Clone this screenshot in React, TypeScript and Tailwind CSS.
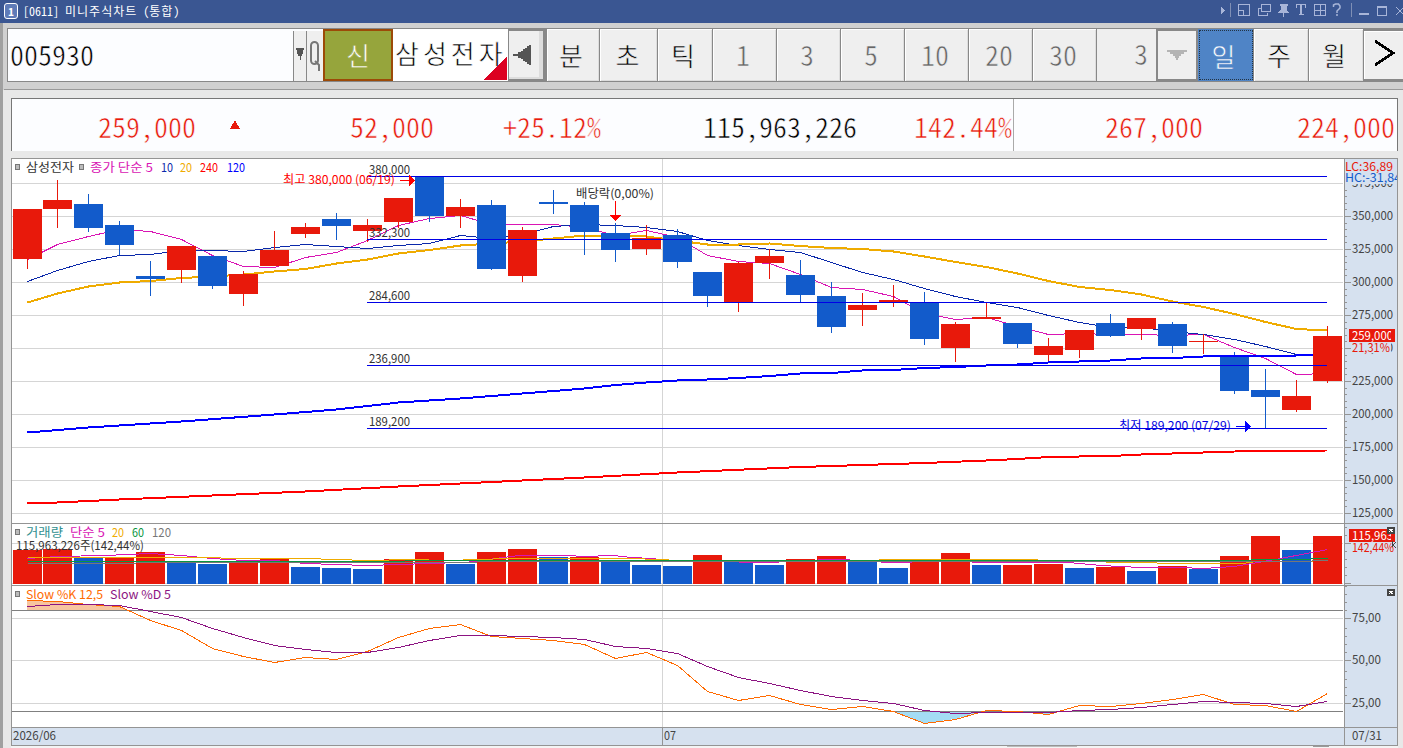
import type { ReactNode } from "react";
import { clsx } from "clsx";

const RED = "#e8190b";
const BLUE = "#125bcb";
const GRID = "#d5d5d5";
const FONT = "'Noto Sans CJK KR', 'Liberation Sans', sans-serif";

// x centre of the n-th daily candle
const cx = (i: number) => (i === 0 ? 27 : i < 22 ? 26 + 31 * i : 25 + 31 * i);

// [up, body top, body bottom, high, low]
const candles: [number, number, number, number, number][] = [
  [1, 209, 259, 209, 269], [1, 200, 209, 180, 228], [0, 204, 228, 194, 232], [0, 225, 245, 221, 255],
  [0, 276, 279, 261, 296], [1, 246, 270, 246, 283], [0, 256, 286, 256, 289], [1, 274, 294, 271, 306],
  [1, 250, 266, 231, 266], [1, 227, 234, 223, 238], [0, 219, 226, 213, 240], [1, 225, 231, 219, 242],
  [1, 198, 222, 198, 228], [0, 176, 216, 176, 222], [1, 207, 216, 199, 228], [0, 205, 269, 200, 270],
  [1, 230, 276, 227, 282], [0, 202, 204, 190, 214], [0, 205, 232, 202, 255], [0, 233, 250, 223, 262],
  [1, 238, 249, 225, 255], [0, 235, 262, 229, 268], [0, 272, 296, 272, 307], [1, 263, 302, 262, 312],
  [1, 256, 263, 249, 279], [0, 275, 295, 260, 302], [0, 296, 327, 282, 333], [1, 305, 310, 293, 326],
  [1, 300, 302, 285, 307], [0, 302, 339, 292, 345], [1, 324, 348, 322, 362], [1, 317, 319, 302, 319],
  [0, 323, 344, 323, 348], [1, 346, 355, 338, 363], [1, 330, 350, 330, 358], [0, 323, 336, 314, 337],
  [1, 318, 329, 318, 340], [0, 324, 346, 322, 353], [1, 341, 342, 334, 354], [0, 356, 391, 352, 394],
  [0, 390, 397, 369, 428], [1, 396, 410, 380, 412], [1, 336, 381, 326, 383],
];

const ma5 = [259, 244, 236, 229, 231, 239, 255, 266, 267, 257, 252, 240, 225, 218, 215, 224, 224, 224, 227, 235, 230, 237, 255, 261, 263, 274, 287, 289, 296, 313, 319, 317, 326, 334, 333, 334, 334, 335, 334, 347, 358, 374, 373];
const ma10 = [281, 270, 261, 255, 254, 250, 250, 251, 247, 244, 246, 248, 245, 243, 235, 238, 234, 226, 224, 225, 227, 231, 240, 245, 249, 252, 262, 272, 279, 288, 296, 302, 307, 315, 322, 327, 327, 331, 334, 339, 346, 354, 354];
const ma20 = [302, 293, 286, 282, 280.5, 277.5, 276, 274, 271, 268.5, 263, 259, 253, 249.5, 245, 243, 241, 238, 235, 235, 236, 240, 244, 244, 243, 245.5, 247.5, 248.5, 251, 256, 261.5, 266.5, 273, 280.5, 286.5, 289.5, 294, 301, 306.5, 313.5, 321.5, 328.5, 330];

const ma120 = "27,432 88,427 181,421 274,414 336,409 398,402 460,398 522,393 584,388 615,384.5 646,382 677,380 707,379 738,377.5 769,375.5 800,373 831,372.5 862,370 893,369.5 924,367.5 955,366.5 986,365 1017,364 1048,362 1079,361 1110,360 1141,358 1172,357.5 1203,356 1265,355.5 1296,355 1327,354";
const ma240 = "27,503 57,502 119,499 212,495 305,491 398,486 491,481.5 584,477 677,472 800,466.5 924,462.5 986,460 1017,458.5 1048,456.5 1110,455.5 1141,454 1172,453 1203,452 1250,450.5 1327,450";

// [rising, bar top]
const volumes: [number, number][] = [
  [1, 550], [1, 549], [0, 558], [1, 558], [1, 552], [0, 562], [0, 564], [1, 562], [1, 559], [0, 567], [0, 568],
  [0, 569], [1, 559], [1, 552], [0, 564], [1, 552], [1, 549], [0, 557], [1, 557], [0, 562], [0, 565], [0, 566],
  [1, 555], [0, 562], [0, 565], [1, 559], [1, 556], [0, 562], [0, 568], [1, 562], [1, 553], [0, 565], [1, 565],
  [1, 564], [0, 568], [1, 567], [0, 571], [1, 566], [0, 569], [1, 556], [1, 536], [0, 550], [1, 536],
];
const vol5 = "27,558 57,556 104,555 150,553 181,555 212,558 243,560 274,560 305,563 336,564 367,565 398,564 429,563 460,562 477,561 495,558 519,555 569,555 582,556 613,555 631,557 651,558 677,561 707,561 769,562 827,559 845,559 863,561 897,562 926,561 1015,562 1068,562 1090,564 1100,565 1120,566 1140,567 1180,567 1203,568 1233,566 1252,563 1280,558 1327,549";
const vol20 = "27,557 210,557 230,558 305,558 336,559 367,560 410,559 446,560 480,559 506,558 631,558 658,559 700,561 814,560 943,559 1033,559 1042,560 1126,562 1156,562 1157,563 1242,563 1256,561 1312,561";
const vol60 = "27,561 390,561 420,560 1250,560 1251,559 1310,559 1311,558 1327,558";
const vol120 = "27,563 135,563 136,562 476,562 477,561 1311,561 1312,560 1327,560";

const slowK = [600, 601, 604, 606, 620, 630, 648, 656, 662, 657, 659, 651, 637, 628, 624, 636, 638, 640, 644, 658, 652, 665, 691, 700, 695, 704, 709, 706, 711, 723, 719, 710, 711, 714, 705, 706, 703, 699, 694, 704, 705, 711, 693];
const slowD = [606, 604, 604, 605, 611, 617, 628, 637, 645, 649, 652, 652, 647, 640, 635, 635, 636, 637, 639, 646, 648, 653, 666, 677, 683, 690, 696, 700, 703, 710, 713, 712, 712, 712, 710, 709, 707, 704, 701, 702, 703, 706, 701];

const toPoints = (ys: number[]) => ys.map((y, i) => `${cx(i)},${y}`).join(" ");

const prices = [375, 350, 325, 300, 275, 250, 225, 200, 175, 150, 125];
const priceY = (p: number) => 216 + ((350 - p) / 25) * 33;

type LabelProps = { x: number; y: number; w: number; fill?: string; children: string };

const Label = ({ x, y, w, fill = "#333", children }: LabelProps) => (
  <text x={x} y={y} textLength={w} lengthAdjust="spacingAndGlyphs" fill={fill} fontSize={12} fontFamily={FONT} xmlSpace="preserve">
    {children}
  </text>
);

const Line = ({ points, color, width = 1 }: { points: string; color: string; width?: number }) => (
  <polyline points={points} fill="none" stroke={color} strokeWidth={width} transform="translate(0.5 0.5)" />
);

const HLine = ({ y, color = GRID, x1 = 12, x2 = 1343 }: { y: number; color?: string; x1?: number; x2?: number }) => (
  <rect x={x1} y={y} width={x2 - x1} height={1} fill={color} />
);

const Handle = ({ x, y }: { x: number; y: number }) => (
  <rect x={x + 0.5} y={y + 0.5} width={4} height={5} fill="#bbb" stroke="#777" />
);

const CloseBox = ({ y }: { y: number }) => (
  <g>
    <rect x={1387} y={y} width={8} height={7} fill="#444" />
    <path d={`M1389 ${y + 2}l4 3m0 -3l-4 3`} stroke="#fff" strokeWidth={1} />
  </g>
);

const Plot = ({ top, height, children }: { top: number; height: number; children: ReactNode }) => (
  <svg className="block bg-white" width={1332} height={height} viewBox={`12 ${top} 1332 ${height}`} shapeRendering="crispEdges">
    <rect x={662} y={top} width={1} height={height} fill={GRID} />
    {children}
  </svg>
);

const Axis = ({ top, height, children }: { top: number; height: number; children: ReactNode }) => (
  <svg className="block border-l border-[#949494] bg-[#d6e1ef]" width={53} height={height} viewBox={`1345 ${top} 52 ${height}`} shapeRendering="crispEdges">
    {children}
  </svg>
);

const Ticks = ({ major, minor }: { major: number[]; minor: number[] }) => (
  <g fill="#949494">
    {major.map((y) => <rect key={y} x={1345} y={y} width={6} height={1} />)}
    {minor.map((y) => <rect key={y} x={1345} y={y} width={2} height={1} />)}
  </g>
);

const PricePlot = () => (
  <Plot top={159} height={364}>
    {prices.map((p) => <HLine key={p} y={priceY(p)} />)}
    <Line points={toPoints(ma5)} color="#d915b4" />
    <Line points={toPoints(ma10)} color="#0a28aa" />
    <Line points={toPoints(ma20)} color="#efab00" width={2} />
    {candles.map(([up, top, bottom, high, low], i) => (
      <g key={i} fill={up ? RED : BLUE}>
        <rect x={cx(i)} y={high} width={1} height={low - high} />
        <rect x={cx(i) - 14} y={top} width={29} height={bottom - top} />
      </g>
    ))}
    <Line points={ma240} color="#f00" width={2} />
    <Line points={ma120} color="#00f" width={2} />
    <rect x={1313} y={336} width={29} height={45} fill={RED} />
    {[
      { y: 176, text: "380,000" },
      { y: 239, text: "332,300" },
      { y: 302, text: "284,600" },
      { y: 365, text: "236,900" },
      { y: 428, text: "189,200" },
    ].map(({ y, text }) => (
      <g key={y}>
        <HLine y={y} color="#0000e6" x1={367} x2={1327} />
        <Label x={369} y={y - 2} w={41}>{text}</Label>
      </g>
    ))}
    <Label x={283} y={184} w={112} fill="#f00">최고 380,000 (06/19)</Label>
    <path d="M400 180h9v-5l6 5.500l-6 5.500v-5h-9z" fill="#f00" />
    <Label x={1119} y={430} w={112} fill="#00d">최저 189,200 (07/29)</Label>
    <path d="M1236 426h9v-5l6 5.500l-6 5.500v-5h-9z" fill="#00f" />
    <Label x={576} y={198} w={78}>배당락(0,00%)</Label>
    <path d="M615 201h1v14h5l-5.500 6l-5.500 -6h5z" fill="#f00" />
    <Handle x={15} y={164} />
    <Label x={26} y={172} w={48}>삼성전자</Label>
    <Handle x={79} y={164} />
    <Label x={90} y={172} w={63} fill="#d915b4">종가 단순 5</Label>
    <Label x={161} y={172} w={12} fill="#0a28aa">10</Label>
    <Label x={180} y={172} w={12} fill="#efab00">20</Label>
    <Label x={200} y={172} w={18} fill="#f00">240</Label>
    <Label x={227} y={172} w={18} fill="#00f">120</Label>
  </Plot>
);

const PriceAxis = () => (
  <Axis top={159} height={364}>
    <Ticks
      major={prices.map(priceY)}
      minor={prices.flatMap((p) => [1, 2, 3, 4].map((n) => Math.round(priceY(p) - n * 6.6)))}
    />
    {prices.map((p) => (
      <Label key={p} x={1352} y={priceY(p) + 4} w={41} fill="#444">{`${p},000`}</Label>
    ))}
    <rect x={1345} y={159} width={52} height={25} fill="#d6e1ef" />
    <Label x={1345} y={171} w={48} fill={RED}>LC:36,89</Label>
    <Label x={1345} y={182} w={56} fill={BLUE}>HC:-31,84</Label>
    <rect x={1351} y={342} width={40} height={11} fill="#d6e1ef" />
    <rect x={1349} y={329} width={46} height={13} fill={RED} />
    <Label x={1352} y={340} w={41} fill="#fff">259,000</Label>
    <rect x={1391} y={330} width={4} height={12} fill={RED} />
    <Label x={1352} y={352} w={38} fill={RED}>21,31%</Label>
  </Axis>
);

const VolumePlot = () => (
  <Plot top={524} height={61}>
    <HLine y={543} />
    <HLine y={583} />
    {volumes.map(([up, top], i) => (
      <rect key={i} x={cx(i) - 14} y={top} width={29} height={584 - top} fill={up ? RED : BLUE} />
    ))}
    <Line points={vol5} color="#d915b4" />
    <Line points={vol20} color="#efab00" />
    <Line points={vol60} color="#0a9640" />
    <Line points={vol120} color="#777" />
    <Handle x={15} y={529} />
    <Label x={26} y={537} w={37} fill="#329090">거래량</Label>
    <Label x={70} y={537} w={35} fill="#d915b4">단순 5</Label>
    <Label x={112} y={537} w={12} fill="#efab00">20</Label>
    <Label x={132} y={537} w={12} fill="#0a9640">60</Label>
    <Label x={152} y={537} w={19} fill="#777">120</Label>
    <Label x={16} y={550} w={128}>115,963,226주(142,44%)</Label>
  </Plot>
);

const VolumeAxis = () => (
  <Axis top={524} height={61}>
    <Ticks major={[543, 583]} minor={[527, 535, 551, 559, 567, 575]} />
    <rect x={1349} y={529} width={46} height={13} fill={RED} />
    <Label x={1352} y={540} w={41} fill="#fff">115,963</Label>
    <rect x={1391} y={534} width={4} height={8} fill={RED} />
    <Label x={1352} y={552} w={42} fill={RED}>142,44%</Label>
    <path d="M1392.500 541v6m3 -5l-2 3l2 3" fill="none" stroke="#444" />
    <CloseBox y={527} />
  </Axis>
);

const StochasticPlot = () => (
  <Plot top={586} height={141}>
    <clipPath id="overbought"><rect x={12} y={586} width={1332} height={24} /></clipPath>
    <clipPath id="oversold"><rect x={12} y={712} width={1332} height={15} /></clipPath>
    {[618, 660, 703].map((y) => <HLine key={y} y={y} />)}
    <polygon points={`27,720 ${toPoints(slowK)} 1327,720`} fill="#f7c5a0" clipPath="url(#overbought)" />
    <polygon points={`27,600 ${toPoints(slowK)} 1327,600`} fill="#a4dcf4" clipPath="url(#oversold)" />
    <HLine y={610} color="#808080" />
    <HLine y={711} color="#808080" />
    <Line points={toPoints(slowK)} color="#ff6a00" />
    <Line points={toPoints(slowD)} color="#8c1482" />
    <Handle x={15} y={591} />
    <Label x={26} y={599} w={77} fill="#ff6a00">Slow %K 12,5</Label>
    <Label x={110} y={599} w={61} fill="#8c1482">Slow %D 5</Label>
  </Plot>
);

const StochasticAxis = () => (
  <Axis top={586} height={141}>
    <Ticks major={[618, 660, 703]} minor={[586, 594, 602, 610, 628, 636, 644, 652, 671, 679, 687, 695]} />
    <Label x={1352} y={622} w={29} fill="#444">75,00</Label>
    <Label x={1352} y={664} w={29} fill="#444">50,00</Label>
    <Label x={1352} y={707} w={29} fill="#444">25,00</Label>
    <CloseBox y={589} />
  </Axis>
);

const TitleBar = () => (
  <header className="flex h-[23px] items-center justify-between bg-[#3a5692] pl-1 font-['Noto_Sans_Mono_CJK_KR','Noto_Sans_CJK_KR',monospace] text-white">
    <div className="flex items-center gap-[5px] pb-px">
      <span className="flex h-4 w-[14px] items-center justify-center rounded-[3px] border border-white bg-[#5f7bb8] text-[11px] font-bold leading-none">1</span>
      <span className="whitespace-pre text-[12px] leading-none">
        [0611] <span className="tracking-[1px]">미니주식차트</span> (<span className="tracking-[1px]">통합</span>)
      </span>
    </div>
    <svg width={183} height={23} viewBox="1220 0 183 23" fill="none" stroke="#a8b5d8" shapeRendering="crispEdges">
      <path d="M1221 7l4 3.500l-4 3.500z" fill="#a8b5d8" stroke="none" />
      <path d="M1230.500 3v14M1351.500 3v14" stroke="#7f8fb5" />
      <path d="M1238.500 4.500h11v11h-11zM1238.500 10.500h5v5h-5z" />
      <path d="M1261.500 4.500h9v7h-9zM1261 8.500h-2.500v7h9v-3" />
      <path d="M1279.500 4h8v2h-1v4l2.500 2v1h-11v-1l2.500 -2v-4h-1zM1283 13h1v4h-1z" fill="#a8b5d8" stroke="none" />
      <path d="M1296.500 7.500v-3h9v3M1299 14.500h5" />
      <path d="M1301 4.500v10" strokeWidth={2} />
      <path d="M1314.500 4.500h11v11h-11zM1320 4v12M1314 10h12" />
      <path d="M1333.500 7v-2l2 -1h3l1.500 2v2l-3 3v2M1337 14v2" strokeWidth={1.5} shapeRendering="auto" />
      <path d="M1359 14h10" strokeWidth={2} />
      <path d="M1377.500 6.500h9v9h-9zM1377 7h10" />
      <path d="M1396 7l8 8M1404 7l-8 8" shapeRendering="auto" />
    </svg>
  </header>
);

const Key = ({ className, children }: { className?: string; children: ReactNode }) => (
  <button
    className={clsx(
      "flex h-[52px] items-center justify-center border-r border-[#888] bg-[#efefef] shadow-[inset_1px_1px_0_#fff,inset_-1px_-1px_0_#ddd] [-webkit-text-stroke:0.6px_#efefef]",
      className
    )}
  >
    {children}
  </button>
);

const Toolbar = () => (
  <div className="flex h-[67px] items-start overflow-hidden border-b border-[#999] bg-[#d0d0d0] pl-[3px] pt-[5px] font-['Noto_Sans_Mono_CJK_KR','Noto_Sans_CJK_KR',monospace] text-[28px] leading-none text-black">
    <div className="flex h-[54px] shrink-0 border-y border-l border-[#888] bg-[#fcfdff]">
      <div className="flex w-[285px] items-center pb-[3px] pl-0.5 [-webkit-text-stroke:0.6px_#fcfdff]">005930</div>
      <button className="mt-0.5 flex h-[50px] w-[14px] items-center justify-center border-x border-[#888] bg-[#efefef] pb-1">
        <svg width={8} height={12} viewBox="0 0 8 12" fill="#555" shapeRendering="crispEdges"><path d="M0 0h8l-2 8h-1v4h-1v-4h-2z" /></svg>
      </button>
      <button className="mt-0.5 flex h-[50px] w-[16px] items-center justify-center bg-[#efefef]">
        <svg width={14} height={34} viewBox="0 0 14 34" fill="none" stroke="#777" strokeWidth={2}>
          <rect x="3" y="3" width="7" height="22" rx="3.500" />
          <path d="M7 22l4 4v6" />
        </svg>
      </button>
      <button className="flex h-[52px] w-[70px] items-center justify-center border-2 border-[#9c4a08] bg-[#96a53c] text-[26px] text-white [-webkit-text-stroke:0.6px_#96a53c]">신</button>
      <div className="relative flex w-[115px] items-center whitespace-nowrap bg-white pb-1 pl-[2px] text-[26px] tracking-[4px] [-webkit-text-stroke:0.6px_#fff]">
        삼성전자
        <svg className="absolute bottom-px right-px" width={24} height={24} viewBox="0 0 24 24" fill="#dc0021" shapeRendering="crispEdges"><path d="M24 0v24H0z" /></svg>
      </div>
      <button className="flex w-[39px] items-center border-b-2 border-l border-r-4 border-t-2 border-[#888] bg-[#efefef] pl-1 shadow-[inset_-4px_-2px_0_#ddd]">
        <svg width={18} height={20} viewBox="0 0 18 20" fill="#555" shapeRendering="crispEdges"><path d="M18 0v20l-4-1v-2l-4-1v-2l-5-1v-2H0V9h5V7l5-1V4l4-1V1z" /></svg>
      </button>
      <Key className="w-[53px] pr-1 text-[26px]">분</Key>
      <Key className="w-[58px] pr-0.5 text-[26px]">초</Key>
      <Key className="w-[55px] pr-1 text-[26px]">틱</Key>
      {["1", "3", "5", "10", "20", "30"].map((n) => (
        <Key key={n} className="w-[64px] pr-[3px] pb-[3px] text-[#666]">{n}</Key>
      ))}
      <div className="flex w-[59px] items-center justify-end bg-[#efefef] pr-2 pb-1 text-[#666] [-webkit-text-stroke:0.6px_#efefef]">3</div>
      <button className="flex w-[42px] items-center justify-center border-2 border-[#888] bg-[#efefef]">
        <svg width={20} height={10} viewBox="0 0 20 10" fill="#b4b4b4" shapeRendering="crispEdges"><path d="M0 0h20v2h-3v2h-3v2h-2v2h-1v2H9V8H8V6H6V4H3V2H0z" /></svg>
      </button>
      <button className="flex h-[52px] w-[56px] items-center justify-center border-r border-[#888] bg-[#4f84c6] pr-1 pt-0.5 text-[26px] text-white outline-1 -outline-offset-2 outline-dotted outline-[#234] [-webkit-text-stroke:0.6px_#4f84c6]">일</button>
      <Key className="w-[55px] pr-1 text-[26px]">주</Key>
      <Key className="w-[55px] pr-1 text-[26px]">월</Key>
      <button className="flex w-[46px] items-center border-y-2 border-[#888] bg-[#efefef] pb-1 pl-[10px] shadow-[inset_1px_1px_0_#fff]">
        <svg width={22} height={26} viewBox="0 0 22 26" fill="none" stroke="#000" strokeWidth={3} shapeRendering="crispEdges"><path d="M1 1l18 12L1 25" /></svg>
      </button>
    </div>
  </div>
);

const QuoteBar = () => (
  <div className="flex h-[53px] w-[1387px] items-center whitespace-nowrap border-x border-t border-[#777] bg-[#fcfdff] pt-px font-['Noto_Sans_Mono_CJK_KR','Noto_Sans_CJK_KR',monospace] text-[28px] leading-none text-[#e8190b] [-webkit-text-stroke:0.6px_#fcfdff]">
    <span className="w-[184px] text-right">259,000</span>
    <span className="flex w-[78px] justify-center pb-0.5">
      <svg width={10} height={9} viewBox="0 0 10 9" fill={RED} stroke="none" shapeRendering="crispEdges"><path d="M5 0l5 9H0z" /></svg>
    </span>
    <span className="w-[160px] text-right">52,000</span>
    <span className="w-[167px] text-right">+25.12%</span>
    <span className="w-[256px] text-right text-black">115,963,226</span>
    <span className="-mt-px flex h-[52px] w-[157px] items-center justify-end border-r border-[#aaa] pr-px pt-px">142.44%</span>
    <span className="w-[189px] text-right">267,000</span>
    <span className="w-[192px] text-right">224,000</span>
  </div>
);

const DateAxis = () => (
  <div className="flex h-[17px] bg-[#d6e1ef]">
    <svg width={1332} height={17} viewBox="12 728 1332 17" shapeRendering="crispEdges">
      <Label x={13} y={740} w={43} fill="#444">2026/06</Label>
      <rect x={662} y={728} width={1} height={17} fill="#949494" />
      <Label x={664} y={740} w={12} fill="#444">07</Label>
    </svg>
    <svg className="border-l border-[#949494]" width={53} height={17} viewBox="1345 728 52 17">
      <Label x={1352} y={740} w={30} fill="#444">07/31</Label>
    </svg>
  </div>
);

const Chart = () => (
  <main className="mt-[7px] flex w-[1387px] flex-col divide-y divide-[#949494] border border-[#949494]">
    <section className="flex">
      <PricePlot />
      <PriceAxis />
    </section>
    <section className="flex">
      <VolumePlot />
      <VolumeAxis />
    </section>
    <section className="flex">
      <StochasticPlot />
      <StochasticAxis />
    </section>
    <DateAxis />
  </main>
);

export default function App() {
  return (
    <div className="flex h-[748px] w-[1403px] flex-col overflow-hidden bg-[#e8e8e8]">
      <TitleBar />
      <div className="flex h-[725px] flex-col border-l-[3px] border-[#a0a0a0]">
        <div className="-mr-px border-l border-[#d0d0d0]">
          <Toolbar />
        </div>
        <div className="flex flex-col pl-2 pt-2">
          <QuoteBar />
          <Chart />
          <div className="flex h-[2px] w-[1387px] bg-[#f4f4f4]">
            <div className="ml-[996px] h-px w-[70px] bg-[#bbb]" />
            <div className="ml-[236px] h-px w-4 bg-[#999]" />
          </div>
        </div>
      </div>
    </div>
  );
}
